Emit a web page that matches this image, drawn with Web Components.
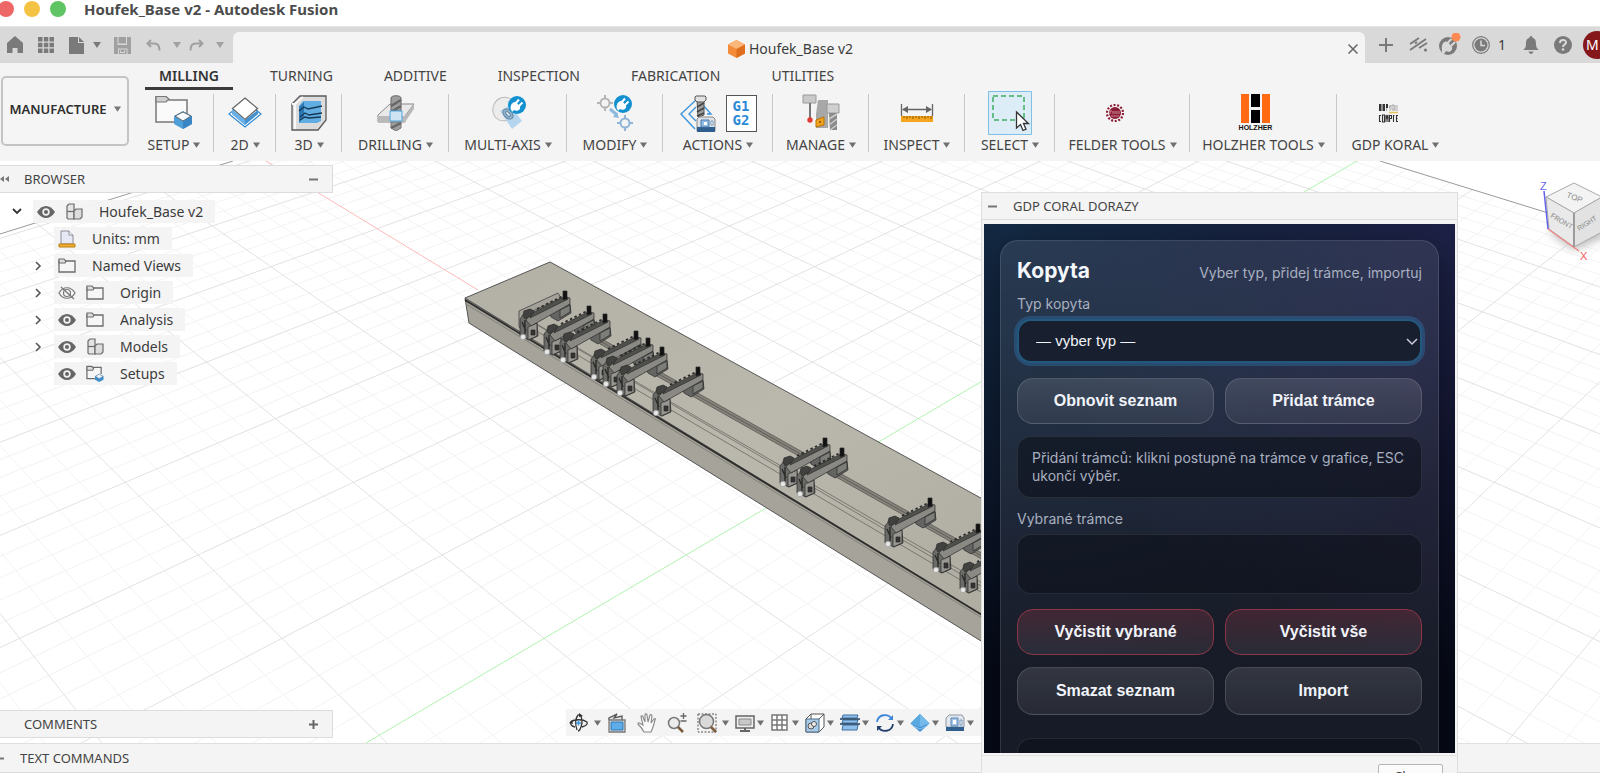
<!DOCTYPE html>
<html lang="cs">
<head>
<meta charset="utf-8">
<title>Houfek_Base v2 - Autodesk Fusion</title>
<style>
html,body{margin:0;height:100%;overflow:hidden;background:#fff}
body{font-family:"Noto Sans","Open Sans",sans-serif;font-size:14px;line-height:20px;color:#3c3c3c}
</style>
</head>
<body>
<fx-app></fx-app>
<script>
const ARROW = '<svg class="arr" width="8" height="6" viewBox="0 0 8 6"><path d="M0 0h8L4 6z" fill="currentColor"/></svg>';
const define = (name, render) => customElements.define(name, class extends HTMLElement {
  connectedCallback() {
    if (this.shadowRoot) return;
    this.attachShadow({mode: 'open'});
    const t = document.createElement('template');
    t.innerHTML = render(this);
    this.shadowRoot.append(t.content.cloneNode(true));
  }
});

/* ---------- icons ---------- */
const EXT = '<g transform="translate(27 10)"><circle r="9" fill="#1390cf"/><path d="M-5.500 5.500C-8 2-5-4-1-3L3 1.500C4 5 0 7-3 5l-2 2z" fill="#fff"/><path d="M-1-2 2-5.500M2 1 5.500-2.500" stroke="#fff" stroke-width="2"/></g>';
const TARGET = '<circle r="4.500" fill="none"/><path d="M0-4.500V-8M0 4.500V8M-4.500 0H-8M4.500 0H8" fill="none"/>';
const I = {
home:[18,18,'<path d="M9 0 1 7v10h5.500v-5h5v5H17V7z" fill="#7a7a7a"/>'],
apps:[16,16,'<path fill="#7a7a7a" d="M0 0h4.500v4.500H0zM5.800 0h4.500v4.500H5.800zM11.500 0H16v4.500h-4.500zM0 5.800h4.500v4.500H0zM5.800 5.800h4.500v4.500H5.800zM11.500 5.800H16v4.500h-4.500zM0 11.500h4.500V16H0zM5.800 11.500h4.500V16H5.800zM11.500 11.500H16V16h-4.500z"/>'],
file:[16,17,'<path fill="#7a7a7a" d="M0 0h9v6h6v11H0z"/><path fill="#7a7a7a" d="M10 0v5h5z"/>'],
save:[17,17,'<path fill="#a0a0a0" d="M0 0h3.500v8h9.500V0h4v17h-3.500v-5.500H4V17H0z"/><path fill="#a0a0a0" d="M4.500 0H12v6.500H4.500zM5 12.500h7.500V17H5z"/><path stroke="#d9d9d9" d="M6.500 15.500h4.500M6.500 13.500V16M10.500 13.500V16"/>'],
undo:[15,13,'<path d="M5 1 1.500 4.500 5 8M1.500 4.500h7c4 0 5 3 5 7" fill="none" stroke="#a0a0a0" stroke-width="2"/>'],
redo:[15,13,'<path d="M10 1l3.500 3.500L10 8M13.500 4.500h-7c-4 0-5 3-5 7" fill="none" stroke="#a0a0a0" stroke-width="2"/>'],
cube:[17,18,'<path d="M8.500 0 17 4.500v9L8.500 18 0 13.500v-9z" fill="#f28c3a"/><path d="M8.500 0 17 4.500 8.500 9 0 4.500z" fill="#fbb679"/><path d="M8.500 9 17 4.500v9L8.500 18z" fill="#dd6f1e"/>'],
close:[10,10,'<path d="M.5.5l9 9M9.500.5l-9 9" stroke="#666" stroke-width="1.500"/>'],
plus:[14,14,'<path d="M7 0v14M0 7h14" stroke="#7a7a7a" stroke-width="2"/>'],
plusb:[9,9,'<path d="M4.500 0v9M0 4.500h9" stroke="#666" stroke-width="2"/>'],
minus:[9,9,'<path d="M0 4.500h9" stroke="#777" stroke-width="2"/>'],
jobs:[19,15,'<path d="M1 7 10 1M1 13 17 2M6 6.500 8 5M10 11l8-5" stroke="#7a7a7a" stroke-width="1.900" fill="none"/><circle cx="16.500" cy="13" r="1.600" fill="#7a7a7a"/>'],
ext:[24,24,'<circle cx="10" cy="13" r="9" fill="#7a7a7a"/><path d="M4 17C3 11 6 7 10 9l4 5c1 4-3 6-6 4l-2 3-2-1z" fill="#d9d9d9"/><path d="M10 9.500l3.500-3.500M13 13l4-4" stroke="#d9d9d9" stroke-width="2"/><circle cx="18" cy="4" r="4.500" fill="#fd8a55"/>'],
clock:[18,18,'<circle cx="9" cy="9" r="8.300" fill="none" stroke="#7a7a7a" stroke-width="1.200"/><circle cx="9" cy="9" r="6.500" fill="#7a7a7a"/><path d="M9 4.500V9.500h4" stroke="#d9d9d9" stroke-width="1.500" fill="none"/>'],
bell:[16,18,'<path d="M8 0c1 0 1.500.8 1.500 1.700C12.500 2.500 13 5 13 8c0 3 1 5 3 6H0c2-1 3-3 3-6 0-3 .5-5.500 3.500-6.300C6.500.8 7 0 8 0zM5.500 15.500h5C10 17 9 18 8 18s-2-1-2.500-2.500z" fill="#7a7a7a"/>'],
help:[18,18,'<circle cx="9" cy="9" r="9" fill="#7a7a7a"/><path d="M6 7c0-4 6-4 6-.5 0 2-3 2.200-3 4.500" fill="none" stroke="#d9d9d9" stroke-width="2"/><circle cx="9" cy="13.500" r="1.300" fill="#d9d9d9"/>'],
setup:[38,36,'<path d="M1 2h10l3 3h18v22H1z" fill="#fafafa" stroke="#777" stroke-width="1.500"/><path d="M1 1.500h10l3 2.500-3 3H1z" fill="#cfcfcf" stroke="#777" stroke-width="1.200"/><path d="M28 16l9 5v8l-9 5-9-5v-8z" fill="#4f9fd8"/><path d="M28 17l8 4-8 5-8-5z" fill="#f6fbff" stroke="#666"/><path d="M28 26l9-5v8l-9 5z" fill="#3a86c4"/>'],
d2:[36,32,'<path d="M18 4 34 17 18 30 2 17z" fill="#fff" stroke="#2d87d0" stroke-width="1.200"/><path d="M5 13l13 10 13-10v4L18 28 5 17z" fill="#4292d2"/><path d="M18 1l12.500 10.500L18 22.500 5.500 11.500z" fill="#fff" stroke="#666" stroke-width="1.300"/><path d="M5 12l13 11v5L5 17z" fill="#68b0e6"/>'],
d3:[36,36,'<path d="M9 1h26v24l-8 10H1V9z" fill="#dcdcdc" stroke="#5a5a5a" stroke-width="1.300"/><path d="M1 9h3L12 2M4 10v24" stroke="#f8f8f8" stroke-width="2" fill="none"/><path d="M12 6h18v20l-4 2H8V11z" fill="#62ade2"/><path d="M8 12l5-5v15l-5 6z" fill="#2c78b4"/><path d="M8 16l5-4 4 2 14-3M9 22l5-4 4 2 13-2M9 25l5-3 4 1 12-1" stroke="#163955" stroke-width="1.300" fill="none"/>'],
drill:[38,36,'<path d="M1 20 13 9h24l-9 12v6H1z" fill="#e9e9e9" stroke="#888"/><path d="M1 21h27l9-12v5l-9 13H1z" fill="#b9b9b9"/><path d="M14 3c0-3 10-3 10 0v13H14z" fill="#9d9d9d" stroke="#666"/><path d="M14 11l10-6M14 17l10-6" stroke="#666" stroke-width="2.500"/><path d="M14 27h10v6l-5 3-5-3z" fill="#9d9d9d" stroke="#777"/><path d="M14 33l10-5" stroke="#666" stroke-width="2.500"/><path d="M13 16h12v10H13z" fill="#cfe4f2" stroke="#4ea5e0"/>'],
multi:[36,36,'<ellipse cx="14" cy="14" rx="11" ry="12" fill="#ececec" stroke="#bbb" transform="rotate(25 14 14)"/><path d="M10 16 20 10 32 26 22 34z" fill="#b5d5ee"/><ellipse cx="18" cy="19" rx="6" ry="4" transform="rotate(45 18 19)" fill="#8fb4d0" stroke="#63839b"/><ellipse cx="18" cy="19" rx="3" ry="1.500" transform="rotate(45 18 19)" fill="#d6e6f2" stroke="#63839b"/>'+EXT],
modify:[38,38,'<g transform="translate(9 9)" stroke="#b5b5b5" stroke-width="2">'+TARGET+'</g><path d="M14 15l7 6" stroke="#8fb9dc" stroke-width="3"/><path d="M23 24l-6-1 4-5z" fill="#8fb9dc"/><g transform="translate(29 29)" stroke="#8fb4d6" stroke-width="2">'+TARGET+'</g>'+EXT],
actions:[36,37,'<path d="M16 5 1 19 15 34M16 12 9 19l7 7M22 9l9 10h-4" fill="none" stroke="#3d94da" stroke-width="1.400"/><path d="M17 5h7v15l-6 2z" fill="#a0a0a0" stroke="#555"/><path d="M17 12l7-4M17 17l7-4M17 21l7-3" stroke="#444" stroke-width="1.600"/><path d="M16 1h9l1 1v3l-2 2h-7l-2-2V2z" fill="#e2e2e2" stroke="#555"/><path d="M17 24l2-2h14l2 2v12H17z" fill="#dfe3e8" stroke="#888"/><path d="M17 32h18v5H17z" fill="#2f5f8f"/><path d="M21 25h8v7h-8z" fill="#8fbbe4" stroke="#4c7ba9"/><path d="M24 27h3v3h-3z" fill="#fff"/><path d="M31 26h2v4h-2z" fill="#fff" stroke="#4c7ba9" stroke-width=".7"/>'],
manage:[38,38,'<path d="M16 6h10v28H14V20z" fill="#a8a8a8"/><path d="M1 1h13v8H1z" fill="#c9c9c9" stroke="#999"/><path d="M8 9v15" stroke="#777" stroke-width="2"/><circle cx="8" cy="26" r="2.700" fill="#e23b35"/><path d="M14 26l8-3v8l-8 2z" fill="#f2a21d" stroke="#b87400"/><circle cx="18" cy="28" r="1" fill="#7a4e00"/><path d="M25 10h12v9H25z" fill="#cfcfcf" stroke="#999"/><path d="M27 19h8v17h-7z" fill="#8a8a8a"/><path d="M27 25l8-5M27 31l8-6M28 36l7-5" stroke="#ccc" stroke-width="1.500"/>'],
inspect:[34,20,'<path d="M1.500 1v12M32.500 1v12" stroke="#666" stroke-width="1.300"/><path d="M3 6.500h28" stroke="#666" stroke-width="1.500"/><path d="M2 6.500 8 3v7zM32 6.500 26 3v7z" fill="#666"/><path d="M1 13h32v6H1z" fill="#f5a51e"/><path d="M4 13v2M7 13v3M10 13v2M13 13v3M16 13v2M19 13v3M22 13v2M25 13v3M28 13v2M31 13v3" stroke="#8a5800"/>'],
select:[44,44,'<path d="M.5.5h43v43H.500z" fill="#dcedf7" stroke="#80bfe4"/><path d="M5 5h31v24H5z" fill="none" stroke="#3fae62" stroke-width="1.500" stroke-dasharray="5 3"/><path d="M28.500 21v16l4-3.500 2.500 6 3-1.300-2.500-5.700h5z" fill="#fff" stroke="#333" stroke-width="1.300"/>'],
felder:[20,20,'<circle cx="10" cy="10" r="8" fill="none" stroke="#8b1c36" stroke-width="2.200" stroke-dasharray="2 1.600"/><circle cx="10" cy="10" r="6" fill="#8b1c36"/><path d="M5 8v3M5 8h2M8 8v3M10 8v3M12 8v3M14 8v3M6 13h8" stroke="#d9a4b0" stroke-width=".8"/>'],
gdp:[20,20,'<path d="M1 1h2.500v7H1zM4.500 1H7v7H4.500zM5.500 3v3M8 1h2v4H8z" fill="#333" /><path d="M8.500 5v3M12 2v6M11 5l2-3M14 2h2v5h-2zM17 2v6M19 2v6" stroke="#999" fill="none" stroke-width=".8"/><path d="M11 9.500h9" stroke="#e6c45a" stroke-width="1.500"/><path d="M1 12.500h2M1.500 12.500v6M1 18.500h2M4.500 12v7h2v-7zM8 19v-7l1 3 1-3v7M11.500 19v-6.500h2v3h-2M15 12.500h1.500M15.500 12v7M18 12.500h2M18 15.500h1.500M18 18.500h2M18.500 12v7" stroke="#333" fill="none" stroke-width="1.100"/>'],
holz:[29,29,'<path d="M0 0h8v29H0zM21 0h8v29h-8z" fill="#ff6a13"/><path d="M10 0h9v13h-9zM10 16h9v13h-9z" fill="#000"/>'],
eye:[18,12,'<path d="M0 6C5-2 13-2 18 6 13 14 5 14 0 6z" fill="#666"/><circle cx="9" cy="6" r="3.700" fill="#f2f2f2"/><circle cx="9" cy="6" r="2" fill="#666"/>'],
hid:[18,14,'<path d="M1 7C5 0 13 0 17 7 13 14 5 14 1 7z" fill="none" stroke="#777" stroke-width="1.200"/><circle cx="9" cy="7" r="3.500" fill="none" stroke="#777" stroke-width="1.200"/><path d="M3 1l13 12" stroke="#777" stroke-width="1.300"/>'],
comp:[17,17,'<path d="M1 3l2-2h5v15H2l-1-1z" fill="#e4e4e4" stroke="#6a6a6a" stroke-width="1.200"/><path d="M1 8.500h7" stroke="#6a6a6a" stroke-width="1.200"/><path d="M8 8l2-2h6v8l-2 2H8z" fill="#dcdcdc" stroke="#6a6a6a" stroke-width="1.200"/>'],
folder:[18,15,'<path d="M1 3h16v11H1z" fill="#f6f6f6" stroke="#6c6c6c" stroke-width="1.300"/><path d="M1 3V1h5l2 2-1 2H1z" fill="#ddd" stroke="#6c6c6c" stroke-width="1.200"/>'],
sfolder:[19,18,'<path d="M10 14H1V2h15v7" fill="#f6f6f6" stroke="#6c6c6c" stroke-width="1.300"/><path d="M1 3V1h5l2 2-1 2H1z" fill="#ddd" stroke="#6c6c6c" stroke-width="1.200"/><path d="M14 9l4.500 2.500V15L14 17.500 9.500 15v-3.500z" fill="#3f8fd0"/><path d="M14 9l4 2.500-4 2.500-4-2.500z" fill="#e8f4fd" stroke="#567" stroke-width=".5"/>'],
doc:[18,18,'<path d="M3 1h8l4 4v9H3z" fill="#e6e9f3" stroke="#8c8c98"/><path d="M11 1v4h4" fill="#fff" stroke="#8c8c98"/><path d="M1 14h16v3H1z" fill="#f3b02e" stroke="#b97e12"/>'],
down:[10,7,'<path d="M1 1l4 4 4-4" fill="none" stroke="#333" stroke-width="1.800"/>'],
right:[7,10,'<path d="M1 1l4 4-4 4" fill="none" stroke="#555" stroke-width="1.600"/>'],
rew:[9,6,'<path d="M4 0v6L0 3zM9 0v6L5 3z" fill="#777"/>'],
orbit:[20,20,'<path d="M6 14C2 13 1 11 2 9c3-3 12-3 16 0 1 2-1 4-5 5M8 17C6 11 6 6 9 2c3-1 4 3 4 8-1 5-2 8-4 8" fill="none" stroke="#333" stroke-width="1.300"/><path d="M0 10l3-3 1 4zM10 0l4 3-4 1z" fill="#333"/><path d="M9.500 7.500v5M7 10h5" stroke="#3d94da" stroke-width="1.500"/>'],
look:[20,20,'<path d="M2 7V5l8-4-3 4 8-2v4" fill="#e6e6e6" stroke="#555" stroke-width="1.300"/><path d="M2 7h16v12H2z" fill="#ddd" stroke="#777" stroke-width="1.300"/><path d="M4 9h12v8H4z" fill="#5eade8" stroke="#2d77b8"/>'],
hand:[20,20,'<path d="M7 19C5 15 3 13 1 11c0-2 2-1 5 1L4 4c0-2 2-1 2 0l2 5V2c0-2 2-1 2 0l1 7 2-7c1-1 2 0 2 1l-1 7 3-4c1-1 2 0 1 1-1 4-2 8-4 12z" fill="#fafafa" stroke="#888" stroke-width="1.100"/>'],
zoom:[20,20,'<circle cx="7" cy="10" r="5.500" fill="#ececec" stroke="#777" stroke-width="1.500"/><path d="M11 14l5 5" stroke="#7b5b3c" stroke-width="2.500"/><path d="M16.500 0v6M13.500 3h6M13.500 8h6" stroke="#666" stroke-width="1.300"/>'],
fit:[20,20,'<path d="M1 1h18v18H1z" fill="none" stroke="#555" stroke-dasharray="2 1.500"/><circle cx="9.500" cy="8.500" r="7" fill="#d9d9d9" stroke="#777" stroke-width="1.500"/><path d="M14 14l5 5" stroke="#7b5b3c" stroke-width="2.500"/>'],
monitor:[20,20,'<path d="M1 3h18v12H1z" fill="#eee" stroke="#666" stroke-width="1.500"/><path d="M4 6h12v6H4z" fill="#c8c8c8" stroke="#888"/><path d="M10 15v2M5 18h10" stroke="#666" stroke-width="2"/>'],
grid:[20,20,'<path d="M2 2h15v15H2zM7 2v15M12 2v15M2 7h15M2 12h15" fill="#fff" stroke="#777" stroke-width="1.500"/>'],
box:[20,20,'<path d="M6 1h13v13l-5 5H1V6z" fill="#fff" stroke="#555"/><path d="M1 6h13v13H1z" fill="#a8cbea" stroke="#4d6a84"/><path d="M14 6l5-5M6 1v5" stroke="#555"/><circle cx="6" cy="13" r="3" fill="#ddd" stroke="#555"/><circle cx="9" cy="11" r="2.500" fill="#eee" stroke="#555"/>'],
planes:[20,20,'<path d="M3 2h15l-1 3H2zM3 7h15l-1 3H2zM3 12h15l-1 5H2z" fill="#8ec0ea" stroke="#3f6f9f"/><path d="M0 6h20M0 11h20" stroke="#1f3e5f" stroke-width="1.300"/>'],
sync:[20,20,'<path d="M2 9c1-8 11-9 15-3" fill="none" stroke="#3d87d8" stroke-width="1.800"/><path d="M18 2v5h-5z" fill="#3d87d8"/><path d="M18 11c-1 8-11 9-15 3" fill="none" stroke="#23406e" stroke-width="1.800"/><path d="M2 18v-5h5z" fill="#23406e"/>'],
diamond:[20,20,'<path d="M10 1l9.500 9.500L10 19 .5 10.500z" fill="#4593d4"/><path d="M10 1l9.500 9.500L10 14 .5 10.500z" fill="#74b9ea"/><path d="M10 1 .5 10.500 10 14z" fill="#5aa8e0"/><path d="M3 13l7 3 7-3" stroke="#8cc4ee" fill="none"/>'],
machine:[20,20,'<path d="M1 5l3-3h13l2 3v9H1z" fill="#e4e8ee" stroke="#8f98a3"/><path d="M1 14h18v4H1z" fill="#2f5f8f"/><path d="M6 5h7v8H6z" fill="#a5c8ea" stroke="#5a86b0"/><path d="M8 7h3v4H8z" fill="#fff"/><path d="M15 7h2v5h-2z" fill="#fff" stroke="#5a86b0" stroke-width=".8"/>']
};
define('fx-icon', el => {
  const [w,h,p] = I[el.getAttribute('name')];
  return `<style>:host{display:inline-flex;flex:none}svg{display:block}</style><svg width="${w}" height="${h}" viewBox="0 0 ${w} ${h}" aria-hidden="true">${p}</svg>`;
});
const ic = n => `<fx-icon name="${n}"></fx-icon>`;
const BTN = 'button{font:inherit;color:inherit;background:none;border:0;padding:0;margin:0;display:flex;align-items:center;justify-content:center}';

/* ---------- window title ---------- */
define('fx-titlebar', () => `<style>
:host{display:flex;align-items:center;height:18px;padding-bottom:8px;background:#fff;gap:10px;font-weight:700;font-size:15px;color:#4c4c4c}
i{width:16px;height:16px;border-radius:50%;flex:none}.r{background:#ec6765;margin-left:-2px}.y{background:#f4c343}.g{background:#5fc464;margin-right:8px}
h1{font:inherit;margin:0}</style><i class="r"></i><i class="y"></i><i class="g"></i><h1><slot></slot></h1>`);

/* ---------- quick access bar with document tab ---------- */
define('fx-quickbar', () => `<style>
:host{display:flex;height:37px;background:#d9d9d9;border-top:1px solid #e6e6e6;box-sizing:border-box;overflow:hidden}
${BTN}
.left{width:227px;padding-left:6px;display:flex;align-items:center;flex:none}
.left button{gap:8px;color:#7a7a7a}.left .dim{color:#a0a0a0}
.left .b1{width:32px;justify-content:flex-start}.left .b2{width:45px;justify-content:flex-start}
.left .n{width:44px;gap:12px}
.tab{flex:1;display:flex;align-items:center;background:#f4f4f4;border-radius:6px 6px 0 0;margin-top:5px;padding:2px 7px 0 0}
.name{flex:1;display:flex;justify-content:center;align-items:center;gap:4px}
.right{width:235px;flex:none;display:flex;align-items:center;padding-bottom:1px}
.right>*{width:32px;flex:none}
.right .j{width:22px}.right .a{width:42px}.right .q{width:44px;gap:8px;justify-content:flex-start;padding-left:1px}
.right .av{box-sizing:border-box;width:28px;height:28px;border-radius:50%;background:#85171b;color:#fff;justify-content:flex-start;margin-left:4px;padding-left:3px}
</style>
<div class="left"><button class="b1" aria-label="Home">${ic('home')}</button><button class="b1" aria-label="Apps">${ic('apps')}</button><button class="b2" aria-label="File">${ic('file')}${ARROW}</button><button class="b1 dim" aria-label="Save">${ic('save')}</button><button class="b2 n dim" aria-label="Undo">${ic('undo')}${ARROW}</button><button class="b2 n dim" aria-label="Redo">${ic('redo')}${ARROW}</button></div>
<div class="tab"><div class="name">${ic('cube')}<span>Houfek_Base v2</span></div><button aria-label="Close tab">${ic('close')}</button></div>
<div class="right"><button class="a" aria-label="New tab">${ic('plus')}</button><button class="j" aria-label="Jobs">${ic('jobs')}</button><button class="a" aria-label="Extensions">${ic('ext')}</button><button class="q" aria-label="Job status">${ic('clock')}<span>1</span></button><button aria-label="Notifications">${ic('bell')}</button><button aria-label="Help">${ic('help')}</button><button class="av">M</button></div>`);

/* ---------- ribbon ---------- */
define('fx-tab', el => `<style>
:host{display:block}
button{font:inherit;color:#444;background:none;border:0;border-bottom:3px solid transparent;padding:3px 14px 2px;margin:0;height:27px;line-height:20px}
button[aria-selected=true]{font-weight:600;color:#333;border-color:#3b3b3b}
</style><button role="tab" aria-selected="${el.hasAttribute('on')}"><slot></slot></button>`);
define('fx-group', el => {
 const icon = el.getAttribute('icon'), label = el.getAttribute('label');
 return `<style>
:host{display:flex;flex-direction:column;align-items:center;box-sizing:border-box;position:relative;height:66px}
:host(:not(:last-of-type))::after{content:"";position:absolute;right:0;top:3px;height:58px;width:1px;background:#c8c8c8}
${BTN}
.ic{height:44px;gap:10px;display:flex;align-items:center;flex:none}
:host([addin]) .ic{margin-right:16px}
.hz{flex-direction:column;gap:1px;font:700 7px/8px "Liberation Sans",Arial,sans-serif;color:#111}
.lb{height:20px;gap:4px;color:#444;white-space:nowrap}.arr{color:#707070;width:7px}
.g{width:31px;height:37px;border:1px solid #555;box-sizing:border-box;color:#2a8ad6;font:700 14px/14px "DejaVu Sans Mono",monospace;background:#fff}
</style><div class="ic"><button class="${icon === 'holz' ? 'hz' : ''}" aria-label="${label}">${ic(icon)}${icon === 'holz' ? '<span>HOLZHER</span>' : ''}</button>${
 el.hasAttribute('code') ? '<button class="g">G1<br>G2</button>' : ''}</div><button class="lb">${label}${ARROW}</button>`;
});
define('fx-ribbon', () => {
 const tabs = ['MILLING','TURNING','ADDITIVE','INSPECTION','FABRICATION','UTILITIES'];
 const groups = [['SETUP','setup',80],['2D','d2',62],['3D','d3',66],['DRILLING','drill',107],['MULTI-AXIS','multi',118],['MODIFY','modify',96],['ACTIONS','actions',110,'code'],['MANAGE','manage',96],['INSPECT','inspect',96],['SELECT','select',90],['FELDER TOOLS','felder',135,'addin'],['HOLZHER TOOLS','holz',147,'addin'],['GDP KORAL','gdp',117,'addin']];
 return `<style>
:host{display:flex;height:98px;background:#f4f4f4;box-sizing:border-box;padding-left:1px}
.ws{width:128px;height:70px;margin:13px 5px 0 0;border:2px solid #c4c4c4;border-radius:5px;background:#f5f5f5;font:600 13px/20px "Noto Sans",sans-serif;color:#2e2e2e;display:flex;align-items:center;justify-content:center;gap:7px;padding:0 0 4px;flex:none}
.arr{color:#777;width:7px}
.tabs{display:flex;gap:23px;padding-left:11px;height:27px}.groups{display:flex;padding-top:1px}
</style><button class="ws">MANUFACTURE${ARROW}</button><div><div class="tabs" role="tablist">${tabs.map((t,i)=>`<fx-tab ${i?'':'on'}>${t}</fx-tab>`).join('')}</div>
<div class="groups">${groups.map(([l,i,w,x])=>`<fx-group label="${l}" icon="${i}" ${x||''} style="width:${w}px"></fx-group>`).join('')}</div></div>`;
});

/* ---------- browser panel ---------- */
define('fx-panel-head', el => `<style>
:host{display:flex;align-items:center;width:333px;height:28px;box-sizing:border-box;background:#f4f4f4;border:1px solid #dcdcdc;border-left:0;padding-right:14px;font-size:13px;color:#444}
.l{width:24px;display:flex}${BTN}h2{font:inherit;margin:0;flex:1}
</style><div class="l">${el.hasAttribute('rew')?ic('rew'):''}</div><h2><slot></slot></h2><button aria-label="Toggle">${ic(el.getAttribute('action'))}</button>`);
define('fx-node', el => {
 const icons = el.getAttribute('icons').split(' '), root = el.hasAttribute('root');
 return `<style>
:host{display:flex;align-items:center;height:27px;padding-left:${root?12:33}px}
.c{width:21px;display:flex}.n{padding-left:2px;box-sizing:border-box}
.b{display:flex;align-items:center;height:23px;background:rgba(243,243,243,.95);padding:0 12px 0 4px}
.b fx-icon{width:18px;justify-content:center;margin-right:10px}
.b fx-icon:last-of-type{margin-right:16px}
</style><span class="c ${root?'':'n'}">${root?ic('down'):el.hasAttribute('leaf')?'':ic('right')}</span><span class="b">${icons.map(ic).join('')}<span><slot></slot></span></span>`;
});

/* ---------- 3D stage ---------- */
define('fx-scene', () => {
 const Y = 743, H = -565;
 let minor = '', major = '';
 for (const [vx, x0, dir] of [[2593,366,1],[-927,1242,-1]]) for (let k = -35; k <= 45; k++) {
   const x = x0 + dir*k*57, y2 = 1000, x2 = vx + (x-vx)*(y2-H)/(Y-H);
   if (!k) continue;
   const s = `M${vx} ${H}L${x2.toFixed(1)} ${y2}`;
   if (k % 5) minor += s; else major += s;
 }
 const clamp = ([x,y]) => `<use href="#clamp" x="${x}" y="${y}"/>`;
 const pins = [[565,290],[589,305],[605,313],[636,330],[648,337],[662,346],[698,366],[825,437],[842,447],[930,497],[978,523],[1005,543]];
 return `<style>:host{display:block;overflow:hidden;background:#fff}svg{display:block;width:100%;height:100%}</style>
<svg viewBox="0 161 1600 582" preserveAspectRatio="xMidYMid slice" role="img" aria-label="3D model">
<defs><clipPath id="floor"><path d="M802-17-800 484V1000H3000V662z"/></clipPath>
<linearGradient id="top" x1="0" y1="0" x2="1" y2="1"><stop offset="0" stop-color="#b3b0a6"/><stop offset=".5" stop-color="#bab7ad"/><stop offset="1" stop-color="#aeaba1"/></linearGradient>
<g id="clamp" stroke="#2a2a2a" stroke-width=".7" stroke-linejoin="round">
<path d="M-17 20 5 14 6 23-7 31-14 27z" fill="#646462"/><path d="M-5 20 5 15 5 22-5 28z" fill="#7d7d7a"/>
<path d="M-45 29-41 24-30 27-28 34-27 46-36 50-45 46z" fill="#6b6b67"/><path d="M-37 37-28 33-28 46-37 50z" fill="#989690"/><path d="M-34 40h4v5h-4z" fill="#333"/>
<path d="M-35 25 1 7 5 8 5 14-34 36-39 30z" fill="#8b8984"/><path d="M-33 23 1 6 3 9-35 28z" fill="#50504d"/><path d="M-28 19 0 5" stroke-dasharray="2.500 2.500" stroke-width="1.800"/>
<path d="M-2 1H2V9L-2 10z" fill="#111"/><path d="M-42 25-41 21-35 19-31 21-33 25-40 29z" fill="#41413f"/><path d="M-43 32l4 9M-40 30v14" stroke-width="1.400"/>
<circle cx="-42" cy="47" r="2.700" fill="#e6e6e6" stroke="#999"/></g></defs>
<g clip-path="url(#floor)" fill="none"><path d="${minor}" stroke="#f3f3f3"/><path d="${major}" stroke="#e2e2e2"/><path d="M-927-565 478 290" stroke="#ffb9b9"/><path d="M2593-565 366 743" stroke="#b0f4b0"/></g>
<path d="M0 234 233 161M1380 161 1600 229" stroke="#9a9a9a" fill="none"/>
<path d="M465 298 469 323 1010 659V630z" fill="#a5a39a" stroke="#555"/>
<path d="M465 298 550 262 1010 514V632z" fill="url(#top)" stroke="#555"/>
<path d="M465 300 1010 632" stroke="#2e2e2c" stroke-width="1.800"/><path d="M466 304 1010 635" stroke="#83817a"/>
<path d="M600 341 1010 572" stroke="#85837b" stroke-width="5"/><path d="M600 338 1010 569M600 344 1010 575M600 341 1010 572" stroke="#55544e" stroke-width=".8"/>
<path d="M528 326 1010 609M532 322 1010 603M528 319 1010 599" stroke="#6a6962" stroke-width=".8"/>
<path d="M519 311 558 293 561 298 522 316V330L519 327z" fill="#a3a198" stroke="#444" stroke-width=".8"/>
${pins.map(clamp).join('')}
</svg>`;
});
define('fx-viewcube', () => `<style>:host{display:block}svg{display:block}</style>
<svg width="66" height="88" viewBox="1534 177 66 88" role="img" aria-label="View cube">
<defs><filter id="s" x="-50%" y="-50%" width="200%" height="200%"><feGaussianBlur stdDeviation="4"/></filter></defs>
<path d="M1548 232 1574 250 1606 236 1600 225z" fill="#bbb" filter="url(#s)"/>
<path d="M1546 197 1574 183 1602 197 1574 213z" fill="#f3f3f3" stroke="#aaa"/><path d="M1546 197 1574 213V247L1549 229z" fill="#e9e9e9" stroke="#aaa"/><path d="M1574 213 1602 197V232L1574 247z" fill="#e2e2e2" stroke="#aaa"/><path d="M1574 213v34" stroke="#777"/>
<path d="M1544 191 1548 229" stroke="#6262e8" stroke-width="1.500"/><path d="M1548 229 1579 251" stroke="#e88" stroke-width="1.500"/>
<g font-family="Liberation Sans,sans-serif" fill="#888"><text x="1540" y="190" font-size="11" fill="#6868ec">Z</text><text x="1580" y="260" font-size="11" fill="#f06060">X</text>
<text font-size="8" transform="translate(1566 197) rotate(22)">TOP</text><text font-size="7" transform="translate(1550 217) rotate(30)">FRONT</text><text font-size="7" transform="translate(1579 231) rotate(-32)">RIGHT</text></g></svg>`);
define('fx-navbar', () => {
 const items = [['orbit',38,1],['look',30],['hand',30],['zoom',30],['fit',38,1],['monitor',35,1],['grid',35,1],['box',35,1],['planes',35,1],['sync',35,1],['diamond',35,1],['machine',35,1]];
 return `<style>:host{display:flex;align-items:center;width:465px;height:27px;background:#f4f4f4;padding-left:3px}${BTN}button{justify-content:space-between;padding:0 6px 0 0;box-sizing:border-box}.s{justify-content:flex-start}.arr{color:#707070;width:7px}</style>
${items.map(([n,w,a])=>`<button class="${a?'':'s'}" style="width:${w}px" aria-label="${n}">${ic(n)}${a?ARROW:''}</button>`).join('')}`;
});
define('fx-stage', () => `<style>
:host{display:grid;min-height:0;overflow:hidden;grid-template:minmax(0,1fr)/minmax(0,1fr)}
fx-scene,.tree,.cm,fx-navbar,fx-viewcube{grid-area:1/1}
fx-scene{min-height:0}
.tree{align-self:start;justify-self:start;padding-top:4px}.tree nav{padding-top:5px}
.cm{align-self:end;justify-self:start;margin-bottom:5px}
fx-navbar{align-self:end;justify-self:center;margin-bottom:7px}
fx-viewcube{align-self:start;justify-self:end;margin-top:16px}
</style><fx-scene></fx-scene>
<div class="tree"><fx-panel-head rew action="minus">BROWSER</fx-panel-head><nav>
<fx-node root icons="eye comp">Houfek_Base v2</fx-node><fx-node leaf icons="doc">Units: mm</fx-node><fx-node icons="folder">Named Views</fx-node><fx-node icons="hid folder">Origin</fx-node><fx-node icons="eye folder">Analysis</fx-node><fx-node icons="eye comp">Models</fx-node><fx-node leaf icons="eye sfolder">Setups</fx-node></nav></div>
<fx-panel-head class="cm" action="plusb">COMMENTS</fx-panel-head><fx-navbar></fx-navbar><fx-viewcube></fx-viewcube>`);
define('fx-textcmd', () => `<style>:host{display:flex;align-items:center;height:28px;background:#f4f4f4;border-top:1px solid #e0e0e0;border-bottom:1px solid #dcdcdc;font-size:13px;color:#444;gap:16px}
fx-icon{margin-left:-5px}</style>${ic('minus')}<span><slot></slot></span>`);

/* ---------- palette ---------- */
define('gdp-button', () => `<style>:host{display:block}
button{width:100%;height:46px;box-sizing:border-box;border-radius:16px;border:1px solid rgba(255,255,255,.14);background:linear-gradient(rgba(255,255,255,.12),rgba(255,255,255,.07));color:#f1f4fa;font:700 16px/20px "Liberation Sans",Arial,sans-serif;padding:0}
:host([danger]) button{border-color:#8e3546;background:linear-gradient(rgba(248,72,88,.18),rgba(255,255,255,.07))}
:host([tall]) button{height:48px}
</style><button><slot></slot></button>`);
define('gdp-form', () => `<style>
:host{display:block;box-sizing:border-box;height:100%;overflow:hidden;padding:16px 16px 0;font:14px/18px Inter,sans-serif;color:#a9b0c0;
background:radial-gradient(110% 85% at 5% 0,rgba(34,72,112,.5),transparent),radial-gradient(90% 85% at 100% 0,rgba(52,50,110,.5),transparent),#060a17}
.card{box-sizing:border-box;height:600px;border:1px solid rgba(255,255,255,.12);border-radius:18px;padding:16px;background:linear-gradient(rgba(255,255,255,.09),rgba(255,255,255,.065));box-shadow:0 10px 30px rgba(0,0,0,.35);display:flex;flex-direction:column}
header{display:flex;justify-content:space-between;align-items:baseline;height:30px}
h2{margin:0;font-size:21px;line-height:28px;font-weight:700;color:#f4f7fc}
label{display:block;height:18px;margin:12px 0 6px}
label.first{margin-top:8px}
.row{display:grid;grid-template-columns:1fr 1fr;gap:11px;margin-bottom:12px}
.gap{margin-top:15px}
.sel{position:relative}.sel svg{position:absolute;right:4px;top:19px}
select{appearance:none;display:block;width:100%;height:44px;box-sizing:border-box;border:2px solid #24587f;border-radius:14px;background:#181f2f;color:#f0f3f8;font:15px/20px "Liberation Sans",Arial,sans-serif;padding:0 17px;outline:0;box-shadow:0 0 0 3px rgba(45,120,180,.38)}
.hint,textarea{box-sizing:border-box;border:1px solid rgba(255,255,255,.09);border-radius:14px;background:rgba(12,16,25,.58);display:block;width:100%;resize:none;margin:0}
.hint{height:62px;padding:12px 14px}
textarea{height:60px}
.log{margin-top:11px}
</style>
<div class="card"><header><h2>Kopyta</h2><span>Vyber typ, přidej trámce, importuj</span></header>
<label for="t" class="first">Typ kopyta</label><div class="sel"><select id="t"><option>— vyber typ —</option></select><svg width="12" height="8" viewBox="0 0 12 8"><path d="M1 1l5 5 5-5" fill="none" stroke="#ccd" stroke-width="1.500"/></svg></div>
<div class="row gap"><gdp-button>Obnovit seznam</gdp-button><gdp-button>Přidat trámce</gdp-button></div>
<div class="hint">Přidání trámců: klikni postupně na trámce v grafice, ESC ukončí výběr.</div>
<label for="l">Vybrané trámce</label><textarea id="l" readonly></textarea>
<div class="row gap"><gdp-button danger>Vyčistit vybrané</gdp-button><gdp-button danger>Vyčistit vše</gdp-button></div>
<div class="row"><gdp-button tall>Smazat seznam</gdp-button><gdp-button tall>Import</gdp-button></div>
<textarea class="log" readonly aria-label="Log"></textarea></div>`);
define('fx-palette', () => `<style>
:host{display:flex;flex-direction:column;box-sizing:border-box;width:477px;background:#f4f4f4;border:1px solid #dedede;font-size:13px;color:#444}
header{display:flex;align-items:center;gap:16px;height:26px;padding-left:6px;border-bottom:1px solid #ddd}
h2{font:inherit;margin:0}${BTN}
main{flex:1;min-height:0;margin:4px 2px 0;overflow:hidden}
footer{height:32px;padding-top:8px;border-top:1px solid #e2e2e2;margin-top:2px;display:flex;justify-content:flex-end;padding-right:14px}
footer button{width:65px;height:24px;border:1px solid #b5b5b5;border-radius:2px;background:#fbfbfb;box-sizing:border-box}
</style><header><button aria-label="Collapse">${ic('minus')}</button><h2>GDP CORAL DORAZY</h2></header><main><slot></slot></main><footer><button>Close</button></footer>`);

define('fx-app', () => `<style>
:host{display:grid;grid-template-rows:auto auto auto minmax(0,1fr) auto;height:100vh;position:relative;overflow:hidden;background:#f4f4f4}
fx-palette{position:absolute;right:142px;top:192px;bottom:-24px}
</style><fx-titlebar>Houfek_Base v2 - Autodesk Fusion</fx-titlebar><fx-quickbar></fx-quickbar><fx-ribbon></fx-ribbon><fx-stage></fx-stage><fx-textcmd>TEXT COMMANDS</fx-textcmd>
<fx-palette><gdp-form></gdp-form></fx-palette>`);
</script>
</body>
</html>
